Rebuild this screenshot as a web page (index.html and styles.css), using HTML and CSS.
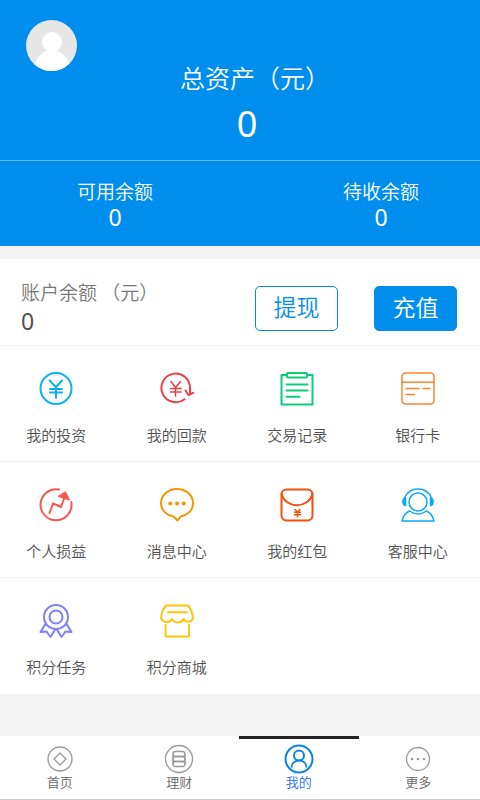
FILE: index.html
```
<!DOCTYPE html>
<html lang="zh-CN">
<head>
<meta charset="utf-8">
<meta name="viewport" content="width=device-width, initial-scale=1">
<title>我的</title>
<link rel="stylesheet" href="styles.css">
</head>
<body>
<header class="hero">
  <div class="total">
    <a class="avatar" href="#" aria-label="头像">
      <svg viewBox="0 0 51 51"><circle cx="25.500" cy="25.500" r="25.500" fill="#e6e6e6"/><circle cx="26" cy="22" r="10" fill="#fff"/><path d="M8.500 44.500C12 35 18 30 26 30s14 5 17.500 13.500A25.500 25.500 0 0 1 8.500 44.500z" fill="#fff"/></svg>
    </a>
    <h1 class="total-label">总资产（元）</h1>
    <p class="total-value">0</p>
  </div>
  <div class="stats">
    <div class="stat"><span class="stat-label">可用余额</span><span class="number">0</span></div>
    <div class="stat"><span class="stat-label">待收余额</span><span class="number">0</span></div>
  </div>
</header>
<main>
  <section class="balance">
    <div class="balance-text"><span class="balance-label">账户余额 （元）</span><span class="number">0</span></div>
    <button class="btn" type="button">提现</button>
    <button class="btn btn-solid" type="button">充值</button>
  </section>
  <nav class="menu">
    <div class="row">
      <a class="item" href="#">
        <svg class="icon blue" viewBox="0 0 34 34"><circle cx="17" cy="16.500" r="15.500"/><path d="M10.500 8.500 17 15l6-6.500M17 15v11M11 17h12M11 20.500h12" /></svg>
        <span>我的投资</span></a>
      <a class="item" href="#">
        <svg class="icon red" viewBox="0 0 34 34"><path d="M24.500 27.200A14.300 14.300 0 1 1 30 16.500V22M25.500 18.500l3 4.500 4.500-2.200"/><path class="medium" d="M11 9.500l4.500 6 5-6M15.500 15.500V24M10.500 16.500h10.500M10.500 20h10.500"/></svg>
        <span>我的回款</span></a>
      <a class="item" href="#">
        <svg class="icon green" viewBox="0 0 34 34"><path d="M7 3H1.500v29.500h31V3H27"/><rect x="7" y="1" width="20" height="4.500" rx="1"/><path d="M6.500 12.500h21M6.500 18.500h21M6.500 24.800h13"/></svg>
        <span>交易记录</span></a>
      <a class="item" href="#">
        <svg class="icon orange" viewBox="0 0 34 34"><rect x="1" y="1" width="32" height="31" rx="3.500"/><path d="M1 10.300h32" /><path d="M5 16.500h13M22 16.500h7M5 22.500h8.500"/></svg>
        <span>银行卡</span></a>
    </div>
    <div class="row">
      <a class="item" href="#">
        <svg class="icon coral" viewBox="0 0 34 34"><path d="M20 1.500A15.500 15.500 0 1 0 32.300 14"/><path d="M10.500 25 14 15.500l8 3.500 4-11"/><path class="fine" d="M26.500 4 30.500 12 19.500 8.500z" fill="#f85550"/></svg>
        <span>个人损益</span></a>
      <a class="item" href="#">
        <svg class="icon amber" viewBox="0 0 34 34"><path d="M13.500 28.500C6 27 1 22 1 15.500 1 7 8 1 17 1s16 6 16 14.500C33 22 28 27 20.500 28.500L17.500 32.500z"/><g fill="#f79500" stroke="none"><circle cx="10.300" cy="15.500" r="2"/><circle cx="17" cy="15.500" r="2"/><circle cx="23.700" cy="15.500" r="2"/></g></svg>
        <span>消息中心</span></a>
      <a class="item" href="#">
        <svg class="icon flame" viewBox="0 0 34 34"><rect x="1.500" y="1.500" width="31" height="31" rx="5"/><path d="M1.500 5.500C5 21 29 21 32.500 5.500"/><path class="medium" d="M15 21.500l2.500 2.500 2.500-2.500M17.500 24v4.800M14.500 24.300h6M14.500 26.700h6"/></svg>
        <span>我的红包</span></a>
      <a class="item" href="#">
        <svg class="icon sky" viewBox="0 0 34 34"><circle cx="17" cy="14" r="9"/><path d="M3.500 10C6 4 11 1 17 1s11 3 13.500 9"/><path d="M4.500 9.500v8C1 16.500 1 11 4.500 9.500zM29.500 9.500v8C33 16.500 33 11 29.500 9.500z" fill="#0baaf5"/><path d="M8.500 23C4 25 2 28 1 33h32c-1-5-3-8-7.500-10C20 27 14 27 8.500 23z"/></svg>
        <span>客服中心</span></a>
    </div>
    <div class="row">
      <a class="item" href="#">
        <svg class="icon violet" viewBox="0 0 34 34"><circle cx="17" cy="13" r="12"/><circle cx="17" cy="13" r="6.500"/><path d="M6.500 20 1.500 28l6-.5 4 5.500 5-8M27.500 20l5 8-6-.5-4 5.500-5-8"/></svg>
        <span>积分任务</span></a>
      <a class="item" href="#">
        <svg class="icon yellow" viewBox="0 0 34 34"><path d="M6 1.500h22c3 3 4.500 8 5 12.500-1 4.500-7 5-9.500 1-2 4.500-8.500 5-11.500 0-3 5-9.500 3.500-11-1C1.500 9.500 3 4.500 6 1.500z"/><path d="M8 8.300h19M5.500 21v10.500q0 1 1 1h21.500q1 0 1-1V21"/></svg>
        <span>积分商城</span></a>
    </div>
  </nav>
</main>
<nav class="tabs">
  <a class="tab" href="#"><svg class="tab-icon" viewBox="0 0 30 30"><circle cx="15" cy="15" r="12"/><path d="M15 9l6 6-6 6-6-6z"/></svg>首页</a>
  <a class="tab" href="#"><svg class="tab-icon" viewBox="0 0 30 30"><circle cx="15" cy="15" r="13.500"/><path d="M9 10v10.500M21 10v10.500"/><rect x="9" y="7.500" width="12" height="5" rx="2.500"/><rect x="9" y="12.500" width="12" height="5" rx="2.500"/><rect x="9" y="17.500" width="12" height="5" rx="2.500"/></svg>理财</a>
  <a class="tab active" href="#" aria-current="page"><svg class="tab-icon" viewBox="0 0 30 30"><circle cx="15" cy="15" r="13.500"/><circle cx="15" cy="11.500" r="5"/><path d="M7.500 23.500C8 14 22 14 22.500 23.500"/></svg>我的</a>
  <a class="tab" href="#"><svg class="tab-icon" viewBox="0 0 30 30"><circle cx="15" cy="15" r="11.500"/><g fill="#999" stroke="none"><circle cx="9" cy="15" r="1.300"/><circle cx="15" cy="15" r="1.300"/><circle cx="21" cy="15" r="1.300"/></g></svg>更多</a>
</nav>
</body>
</html>
```
FILE: styles.css
```
* {
  box-sizing: border-box;
}

body {
  margin: 0;
  min-height: 100vh;
  display: flex;
  flex-direction: column;
  background: #f3f3f3;
  color: #505050;
  font-family: "Noto Sans CJK SC", sans-serif;
  font-weight: 350;
}

a {
  color: inherit;
  text-decoration: none;
}

svg {
  display: block;
  fill: none;
}

.hero {
  background: #008eee;
  color: #fff;
}

.total {
  position: relative;
  padding: 58px 0 13px;
  text-align: center;
  border-bottom: 1px solid #58b8f8;
}

.avatar {
  position: absolute;
  top: 20px;
  left: 26px;
  width: 51px;
}

.total-label {
  margin: 0 0 0 30px;
  font-size: 25px;
  line-height: 38px;
  font-weight: 350;
}

.total-value {
  margin: 0;
  padding: 5px 0 0 14px;
  font-family: "Noto Sans", sans-serif;
  font-size: 36px;
  font-weight: 400;
  line-height: 46px;
}

.stats {
  display: flex;
  justify-content: space-between;
  padding: 17px 61px 15px 77px;
}

.stat {
  display: flex;
  flex-direction: column;
  align-items: center;
}

.stat-label {
  font-size: 19px;
  line-height: 26px;
}

.number {
  font-family: "Noto Sans", sans-serif;
  font-size: 23px;
  font-weight: 400;
  line-height: 27px;
}

.balance {
  display: flex;
  align-items: flex-start;
  gap: 36px;
  margin-top: 13px;
  padding: 19px 23px 9px 21px;
  background: #fff;
  border-bottom: 1px solid #f0f0f0;
}

.balance-text {
  flex: 1;
  display: flex;
  flex-direction: column;
}

.balance-label {
  font-size: 19px;
  line-height: 28px;
  color: #777;
  white-space: nowrap;
}

.balance-text .number {
  line-height: 30px;
}

.btn {
  width: 83px;
  height: 45px;
  margin-top: 8px;
  padding: 0 0 6px;
  border: 1px solid #008eee;
  border-radius: 5px;
  background: #fff;
  color: #008eee;
  font: inherit;
  font-size: 23px;
  line-height: 34px;
}

.btn-solid {
  background: #008eee;
  color: #fff;
}

.menu {
  background: #fff;
}

.row {
  display: grid;
  grid-template-columns: repeat(4, 1fr);
  margin-left: -4px;
  padding: 26px 2px 15px 0;
  border-bottom: 1px solid #f0f0f0;
}

.row:last-child {
  border-color: transparent;
}

.item {
  display: flex;
  flex-direction: column;
  align-items: center;
  gap: 18px;
  font-size: 15px;
  line-height: 22px;
}

.icon {
  width: 34px;
  height: 34px;
  stroke-width: 2;
  stroke-linejoin: round;
  stroke-linecap: round;
}

.fine {
  stroke-width: 1;
}

.medium {
  stroke-width: 1.5;
}

.blue { stroke: #0bb4f0; }
.red { stroke: #f23c40; }
.green { stroke: #08cf78; }
.orange { stroke: #f98532; stroke-width: 1.5; }
.coral { stroke: #f85550; }
.amber { stroke: #f79500; }
.flame { stroke: #fa4e08; }
.sky { stroke: #0baaf5; stroke-width: 1.5; }
.violet { stroke: #7f7ffa; }
.yellow { stroke: #fcc60a; }

.tabs {
  display: grid;
  grid-template-columns: repeat(4, 1fr);
  margin-top: auto;
  padding-right: 2px;
  background: #fff;
  border-bottom: 1px solid #ccc;
}

.tab {
  display: flex;
  flex-direction: column;
  align-items: center;
  padding: 5px 0 9px;
  border-top: 3px solid transparent;
  font-size: 13px;
  line-height: 16px;
  color: #666;
}

.tab-icon {
  width: 30px;
  height: 30px;
  stroke: #999;
  stroke-width: 1.3;
}

.active {
  border-color: #222;
  color: #1a6cf0;
}

.active .tab-icon {
  stroke: #0a84e4;
  stroke-width: 2;
}
```
